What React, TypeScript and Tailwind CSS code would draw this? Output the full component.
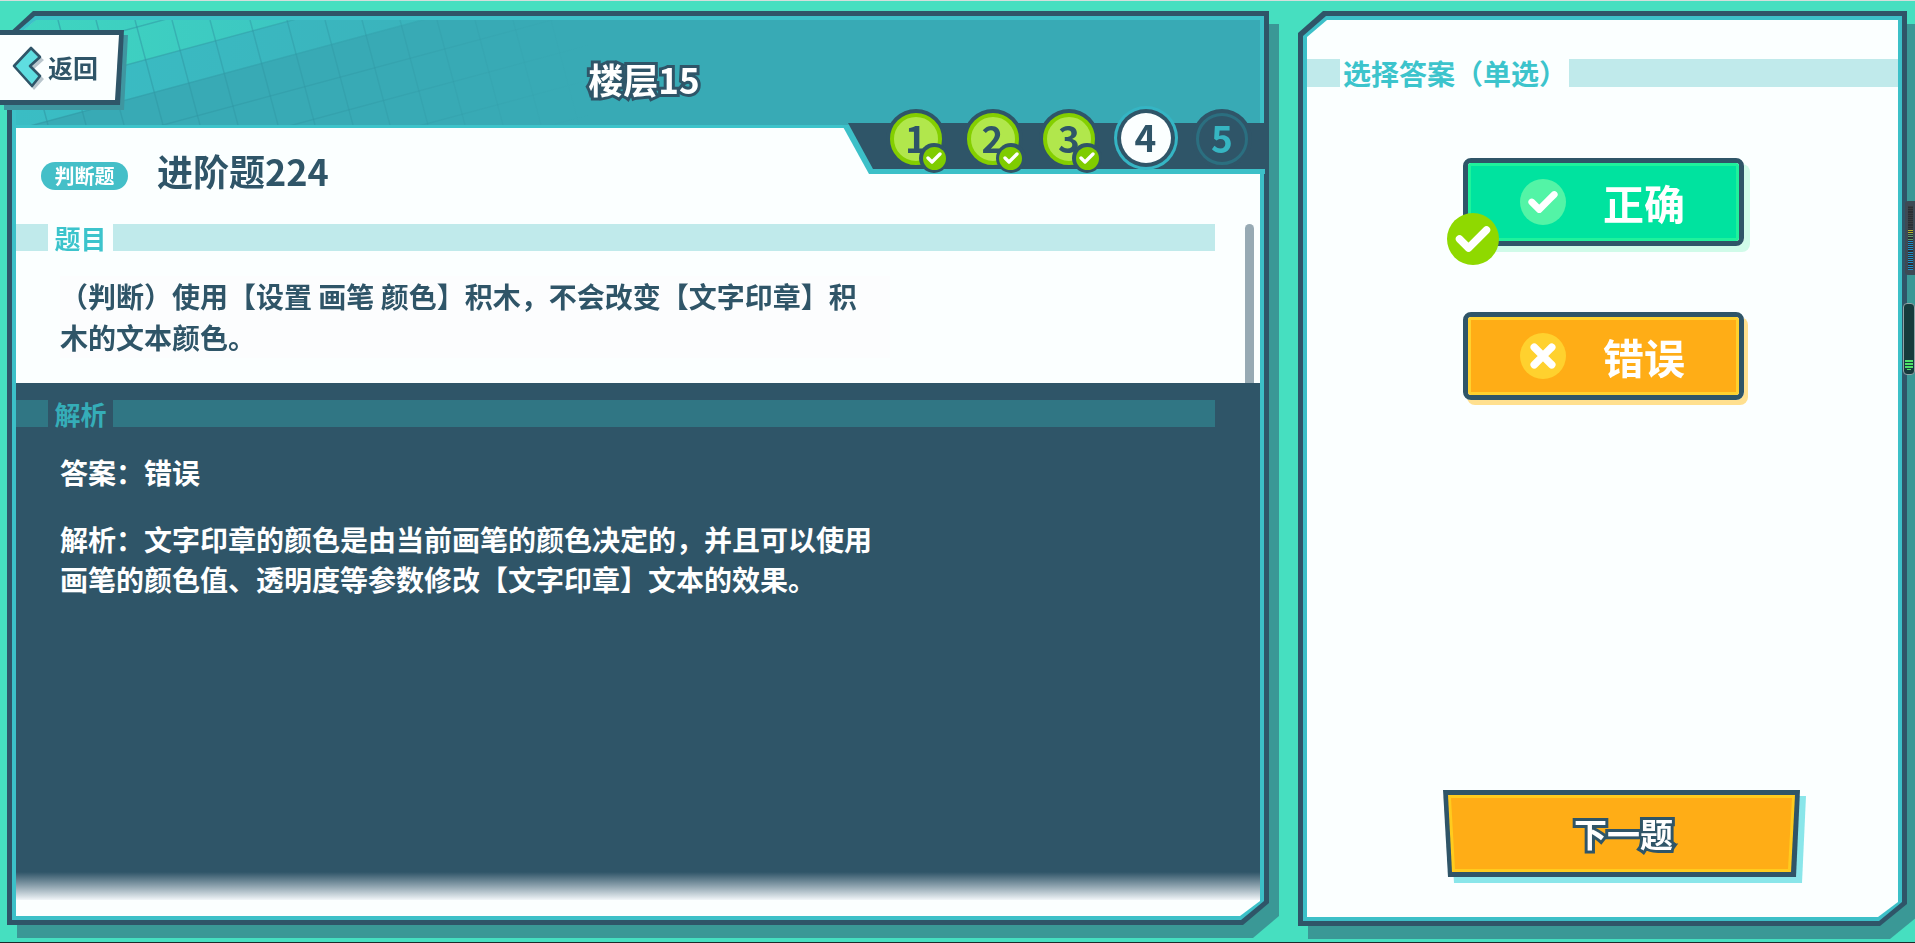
import React from "react";

function Tick({ size, stroke = 5 }: { size: number; stroke?: number }) {
  return (
    <svg width={size} height={size} viewBox="0 0 24 24" fill="none">
      <path d="M3 12 L9 18 L21 6" stroke="#ffffff" strokeWidth={stroke} strokeLinecap="round" strokeLinejoin="round" />
    </svg>
  );
}

function Cross({ size }: { size: number }) {
  return (
    <svg width={size} height={size} viewBox="0 0 24 24" fill="none">
      <path d="M5 5 L19 19 M19 5 L5 19" stroke="#ffffff" strokeWidth={6} strokeLinecap="round" />
    </svg>
  );
}

function HeaderArt() {
  const verticals = [-20, 20, 58, 96, 135, 172, 210, 250, 287, 325, 362, 400, 437, 475, 513, 551];
  const slants = [29, 64, 99, 134, 169, 204, 239, 274];
  return (
    <svg className="absolute inset-0" width="1244" height="105" viewBox="0 0 1244 105">
      <defs>
        <linearGradient id="b1" gradientUnits="userSpaceOnUse" x1="0" y1="0" x2="280" y2="0">
          <stop offset="0" stopColor="#3fd6c0" />
          <stop offset="1" stopColor="#3cc6c2" />
        </linearGradient>
        <linearGradient id="b2" gradientUnits="userSpaceOnUse" x1="0" y1="0" x2="420" y2="0">
          <stop offset="0" stopColor="#3abdc4" />
          <stop offset="1" stopColor="#3ab3bc" />
        </linearGradient>
        <linearGradient id="gl" gradientUnits="userSpaceOnUse" x1="0" y1="0" x2="580" y2="0">
          <stop offset="0" stopColor="#2f97a3" stopOpacity="0.6" />
          <stop offset="0.6" stopColor="#2f97a3" stopOpacity="0.4" />
          <stop offset="1" stopColor="#2f97a3" stopOpacity="0" />
        </linearGradient>
      </defs>
      <polygon points="0,0 408,0 17,105 0,105" fill="url(#b2)" />
      <polygon points="0,0 277,0 0,75" fill="url(#b1)" />
      {verticals.map((x) => (
        <line key={x} x1={x - 16} y1={0} x2={x + 12} y2={105} stroke="url(#gl)" strokeWidth="1.5" />
      ))}
      {slants.map((c) => (
        <line key={c} x1={0} y1={c - 24.3} x2={600} y2={c - 24.3 - 162} stroke="url(#gl)" strokeWidth="1.5" />
      ))}
    </svg>
  );
}

function BackButton() {
  return (
    <div className="absolute left-0 top-[29px] z-20 h-[75px] w-[124px] [filter:drop-shadow(4px_5px_0_#3f96a0)]">
      <div className="h-full w-full bg-[#2f5568] [clip-path:polygon(0_0,100%_0,calc(100%-4px)_100%,0_100%)]">
        <div className="flex h-[65px] w-[119px] translate-y-[5px] items-center gap-[4px] bg-[#fbffff] pl-[12px] [clip-path:polygon(0_0,100%_0,calc(100%-4px)_100%,0_100%)]">
          <svg width="32" height="46" viewBox="0 0 32 46" fill="none">
            <path d="M19 3 L3 21 L20 42 L30 31 L20 21 L30 12 Z" transform="translate(2 3)" fill="#b9c6cd" />
            <path d="M19 3 L2 21 L20 41 L28 31 L18 21 L28 12 Z" fill="#5fdde0" stroke="#2f5568" strokeWidth="2.6" strokeLinejoin="round" />
          </svg>
          <span className="text-[25px] font-bold leading-none text-[#2f5568]">返回</span>
        </div>
      </div>
    </div>
  );
}

function DoneStep({ n }: { n: number }) {
  return (
    <div className="relative flex h-[60px] w-[60px] items-center justify-center rounded-full bg-[#2f5568]">
      <div className="flex h-[52px] w-[52px] items-center justify-center rounded-full border-[4px] border-[#84cf00] bg-[#b1e74c] pb-[4px] text-[37px] font-bold leading-none text-[#2f5568]">
        {n}
      </div>
      <div className="absolute left-[33px] top-[34px] flex h-[30px] w-[30px] items-center justify-center rounded-full bg-[#2f5568]">
        <div className="flex h-[23px] w-[23px] items-center justify-center rounded-full bg-[#7fcc00]">
          <Tick size={16} stroke={5} />
        </div>
      </div>
    </div>
  );
}

function Steps() {
  return (
    <>
      <div className="absolute left-[835px] top-[112px] h-[51px] w-[423px] bg-[#3cc0c8] [clip-path:polygon(0_2px,100%_0,100%_100%,27px_100%)]" />
      <div className="absolute left-[841px] top-[112px] h-[46px] w-[421px] bg-[#2f5568] [clip-path:polygon(0_0,100%_0,100%_100%,25px_100%)]" />
      <div className="absolute left-[879px] top-[96px] flex items-center gap-[16.5px]">
        <DoneStep n={1} />
        <DoneStep n={2} />
        <DoneStep n={3} />
        <div className="-mx-[2px] flex h-[64px] w-[64px] -translate-y-[1px] items-center justify-center rounded-full bg-[#35b5c4]">
          <div className="flex h-[58px] w-[58px] items-center justify-center rounded-full bg-[#2f5568]">
            <div className="flex h-[50px] w-[50px] items-center justify-center rounded-full bg-[#fbffff] pb-[4px] text-[37px] font-bold leading-none text-[#2f5568]">
              4
            </div>
          </div>
        </div>
        <div className="flex h-[60px] w-[60px] items-center justify-center rounded-full bg-[#2f5568]">
          <div className="flex h-[52px] w-[52px] items-center justify-center rounded-full border-[3px] border-[#2b6f80] pb-[4px] text-[37px] font-bold leading-none text-[#36b5c2]">
            5
          </div>
        </div>
      </div>
    </>
  );
}

function SectionBar({ title, dim }: { title: string; dim?: boolean }) {
  const bar = dim ? "bg-[#307684]" : "bg-[#c0eaeb]";
  return (
    <div className="flex h-[27px] w-[1199px] items-stretch">
      <div className={`w-[32px] ${bar}`} />
      <div className={`flex w-[65px] items-center justify-center text-[26px] font-bold leading-none ${dim ? "text-[#35adb8]" : "text-[#3cc4cc]"}`}>
        {title}
      </div>
      <div className={`flex-1 ${bar}`} />
    </div>
  );
}

function LeftPanel() {
  return (
    <div className="relative h-[914px] w-[1262px] shrink-0 [filter:drop-shadow(10px_13px_0_#3a9896)]">
      <div className="relative h-full bg-[#2f5568] p-[5px] [clip-path:polygon(26px_0,100%_0,100%_calc(100%-22px),calc(100%-26px)_100%,0_100%,0_24px)]">
        <div className="h-full bg-[#3cc0c8] p-[4px] [clip-path:polygon(23px_0,100%_0,100%_calc(100%-19px),calc(100%-23px)_100%,0_100%,0_20px)]">
          <div className="flex h-full flex-col bg-[#fbffff] [clip-path:polygon(20px_0,100%_0,100%_calc(100%-15px),calc(100%-20px)_100%,0_100%,0_17px)]">
            <div className="relative flex h-[108px] shrink-0 items-center justify-center overflow-hidden border-b-[3px] border-[#3dc3ca] bg-[#38aab5]">
              <HeaderArt />
              <span className="relative translate-x-[6px] translate-y-[6px] text-[35px] font-bold leading-none text-white [-webkit-text-stroke:6px_#2f5568] [paint-order:stroke_fill]">
                楼层15
              </span>
            </div>
            <div className="relative flex h-[255px] shrink-0 flex-col">
              <div className="flex h-[96px] shrink-0 items-center pl-[25px]">
                <div className="flex h-[28px] w-[87px] items-center justify-center rounded-full bg-[#44bfc8] text-[20px] font-bold leading-none text-white">
                  判断题
                </div>
                <div className="ml-[29px] -translate-y-[6px] text-[36px] font-bold leading-none text-[#2f5568]">进阶题224</div>
              </div>
              <SectionBar title="题目" />
              <div className="ml-[44px] mt-[25px] w-[830px] bg-[#fcfdfe] text-[28px] font-bold leading-[41px] text-[#2f5568]">
                （判断）使用【设置 画笔 颜色】积木，不会改变【文字印章】积<br />木的文本颜色。
              </div>
              <div className="absolute bottom-0 right-[6px] top-[96px] w-[9px] rounded-t-full bg-[#97aab4]" />
            </div>
            <div className="flex-1 bg-[#2f5568] pt-[17px]">
              <SectionBar title="解析" dim />
              <div className="ml-[44px] mt-[25px] w-[830px] text-[28px] font-bold leading-[40px] text-white">
                <p>答案：错误</p>
                <p className="mt-[27px]">
                  解析：文字印章的颜色是由当前画笔的颜色决定的，并且可以使用<br />画笔的颜色值、透明度等参数修改【文字印章】文本的效果。
                </p>
              </div>
            </div>
            <div className="h-[28px] shrink-0 bg-gradient-to-b from-[#2f5568] to-[#f1f5f8]" />
            <div className="h-[16px] shrink-0" />
          </div>
        </div>
      </div>
      <Steps />
    </div>
  );
}

function AnswerButton({
  label,
  fill,
  ring,
  shadow,
  disc,
  children,
  badge,
}: {
  label: string;
  fill: string;
  ring: string;
  shadow: string;
  disc: string;
  children: React.ReactNode;
  badge?: boolean;
}) {
  return (
    <div className={`relative ml-[156px] h-[88px] w-[281px] rounded-[8px] border-[5px] border-[#2f5568] ${shadow}`}>
      <div className={`flex h-full items-center rounded-[3px] border-[3px] pl-[49px] ${fill} ${ring}`}>
        <div className={`flex h-[46px] w-[46px] items-center justify-center rounded-full ${disc}`}>{children}</div>
        <span className="ml-[37px] text-[41px] font-bold leading-none text-white">{label}</span>
      </div>
      {badge && (
        <div className="absolute left-[-21px] top-[50px] flex h-[52px] w-[52px] items-center justify-center rounded-full bg-[#8fd900]">
          <Tick size={36} stroke={5} />
        </div>
      )}
    </div>
  );
}

function RightPanel() {
  return (
    <div className="relative h-[915px] w-[609px] shrink-0 [filter:drop-shadow(10px_13px_0_#3a9896)]">
      <div className="h-full bg-[#2f5568] p-[5px] [clip-path:polygon(25px_0,100%_0,100%_calc(100%-22px),calc(100%-27px)_100%,0_100%,0_22px)]">
        <div className="h-full bg-[#3cc0c8] p-[4px] [clip-path:polygon(23px_0,100%_0,100%_calc(100%-19px),calc(100%-23px)_100%,0_100%,0_20px)]">
          <div className="flex h-full flex-col bg-[#fbffff] pt-[39px] [clip-path:polygon(20px_0,100%_0,100%_calc(100%-15px),calc(100%-20px)_100%,0_100%,0_17px)]">
            <div className="flex h-[28px] shrink-0 items-stretch">
              <div className="w-[33px] bg-[#c0eaeb]" />
              <div className="flex w-[229px] items-center pl-[3px] text-[28px] font-bold leading-none text-[#3cc4cc]">
                选择答案（单选）
              </div>
              <div className="flex-1 bg-[#c0eaeb]" />
            </div>
            <div className="mt-[71px]">
              <AnswerButton
                label="正确"
                fill="bg-[#00e39f]"
                ring="border-[#1ff29c]"
                shadow="shadow-[6px_6px_0_#d0fbe9]"
                disc="bg-[#53f4a6]"
                badge
              >
                <Tick size={30} stroke={5.4} />
              </AnswerButton>
            </div>
            <div className="mt-[66px]">
              <AnswerButton
                label="错误"
                fill="bg-[#ffad16]"
                ring="border-[#ffd12e]"
                shadow="shadow-[4px_5px_0_#ffe08f]"
                disc="bg-[#ffd12e]"
              >
                <Cross size={30} />
              </AnswerButton>
            </div>
            <div className="mb-[40px] ml-[136px] mt-auto h-[87px] w-[357px] [filter:drop-shadow(6px_6px_0_#8ae6ea)]">
              <div className="h-full bg-[#2f5568] p-[5px] [clip-path:polygon(0_0,100%_0,calc(100%-4px)_100%,5px_100%)]">
                <div className="h-full bg-[#ffcb1e] p-[3px] [clip-path:polygon(0_0,100%_0,calc(100%-4px)_100%,4px_100%)]">
                  <div className="flex h-full items-center justify-center bg-[#ffad16] pl-[4px] [clip-path:polygon(0_0,100%_0,calc(100%-4px)_100%,4px_100%)]">
                    <span className="text-[33px] font-bold leading-none text-white [-webkit-text-stroke:6px_#2f5568] [paint-order:stroke_fill]">
                      下一题
                    </span>
                  </div>
                </div>
              </div>
            </div>
          </div>
        </div>
      </div>
    </div>
  );
}

function Meters() {
  const leds = Array.from({ length: 30 }, (_, i) =>
    i < 11 ? "#3a3d40" : i < 13 ? "#b5b52c" : i < 16 ? "#5f9a6a" : "#1f8fc6"
  );
  return (
    <>
      <div className="absolute right-0 top-[200px] z-10 flex h-[74px] w-[10px] justify-center rounded-l-[3px] bg-[#3d4a55] py-[5px]">
        <div className="flex w-[5px] flex-col justify-between bg-[#2b3036]">
          {leds.map((c, i) => (
            <div key={i} className="h-px w-full" style={{ backgroundColor: c }} />
          ))}
        </div>
      </div>
      <div className="absolute right-0 top-[302px] z-10 flex h-[72px] w-[12px] flex-col justify-end gap-[1px] rounded-[4px] border border-[#8fa3a6] bg-[#163a3c] px-[1px] pb-[4px]">
        <div className="h-[2px] bg-[#4fe06a]" />
        <div className="h-[2px] bg-[#4fe06a]" />
        <div className="h-[2px] bg-[#4fe06a]" />
        <div className="mx-[2px] h-[1px] bg-[#4fe06a]" />
      </div>
    </>
  );
}

export default function App() {
  return (
    <div className="relative box-border flex h-[943px] w-[1915px] gap-[29px] overflow-hidden border-y border-t-[#d3dfdc] border-b-[#1b2a2a] bg-[#46dfc0] pl-[7px] pt-[10px] font-['Noto_Sans_CJK_SC','Noto_Sans',sans-serif]">
      <LeftPanel />
      <RightPanel />
      <BackButton />
      <Meters />
    </div>
  );
}
